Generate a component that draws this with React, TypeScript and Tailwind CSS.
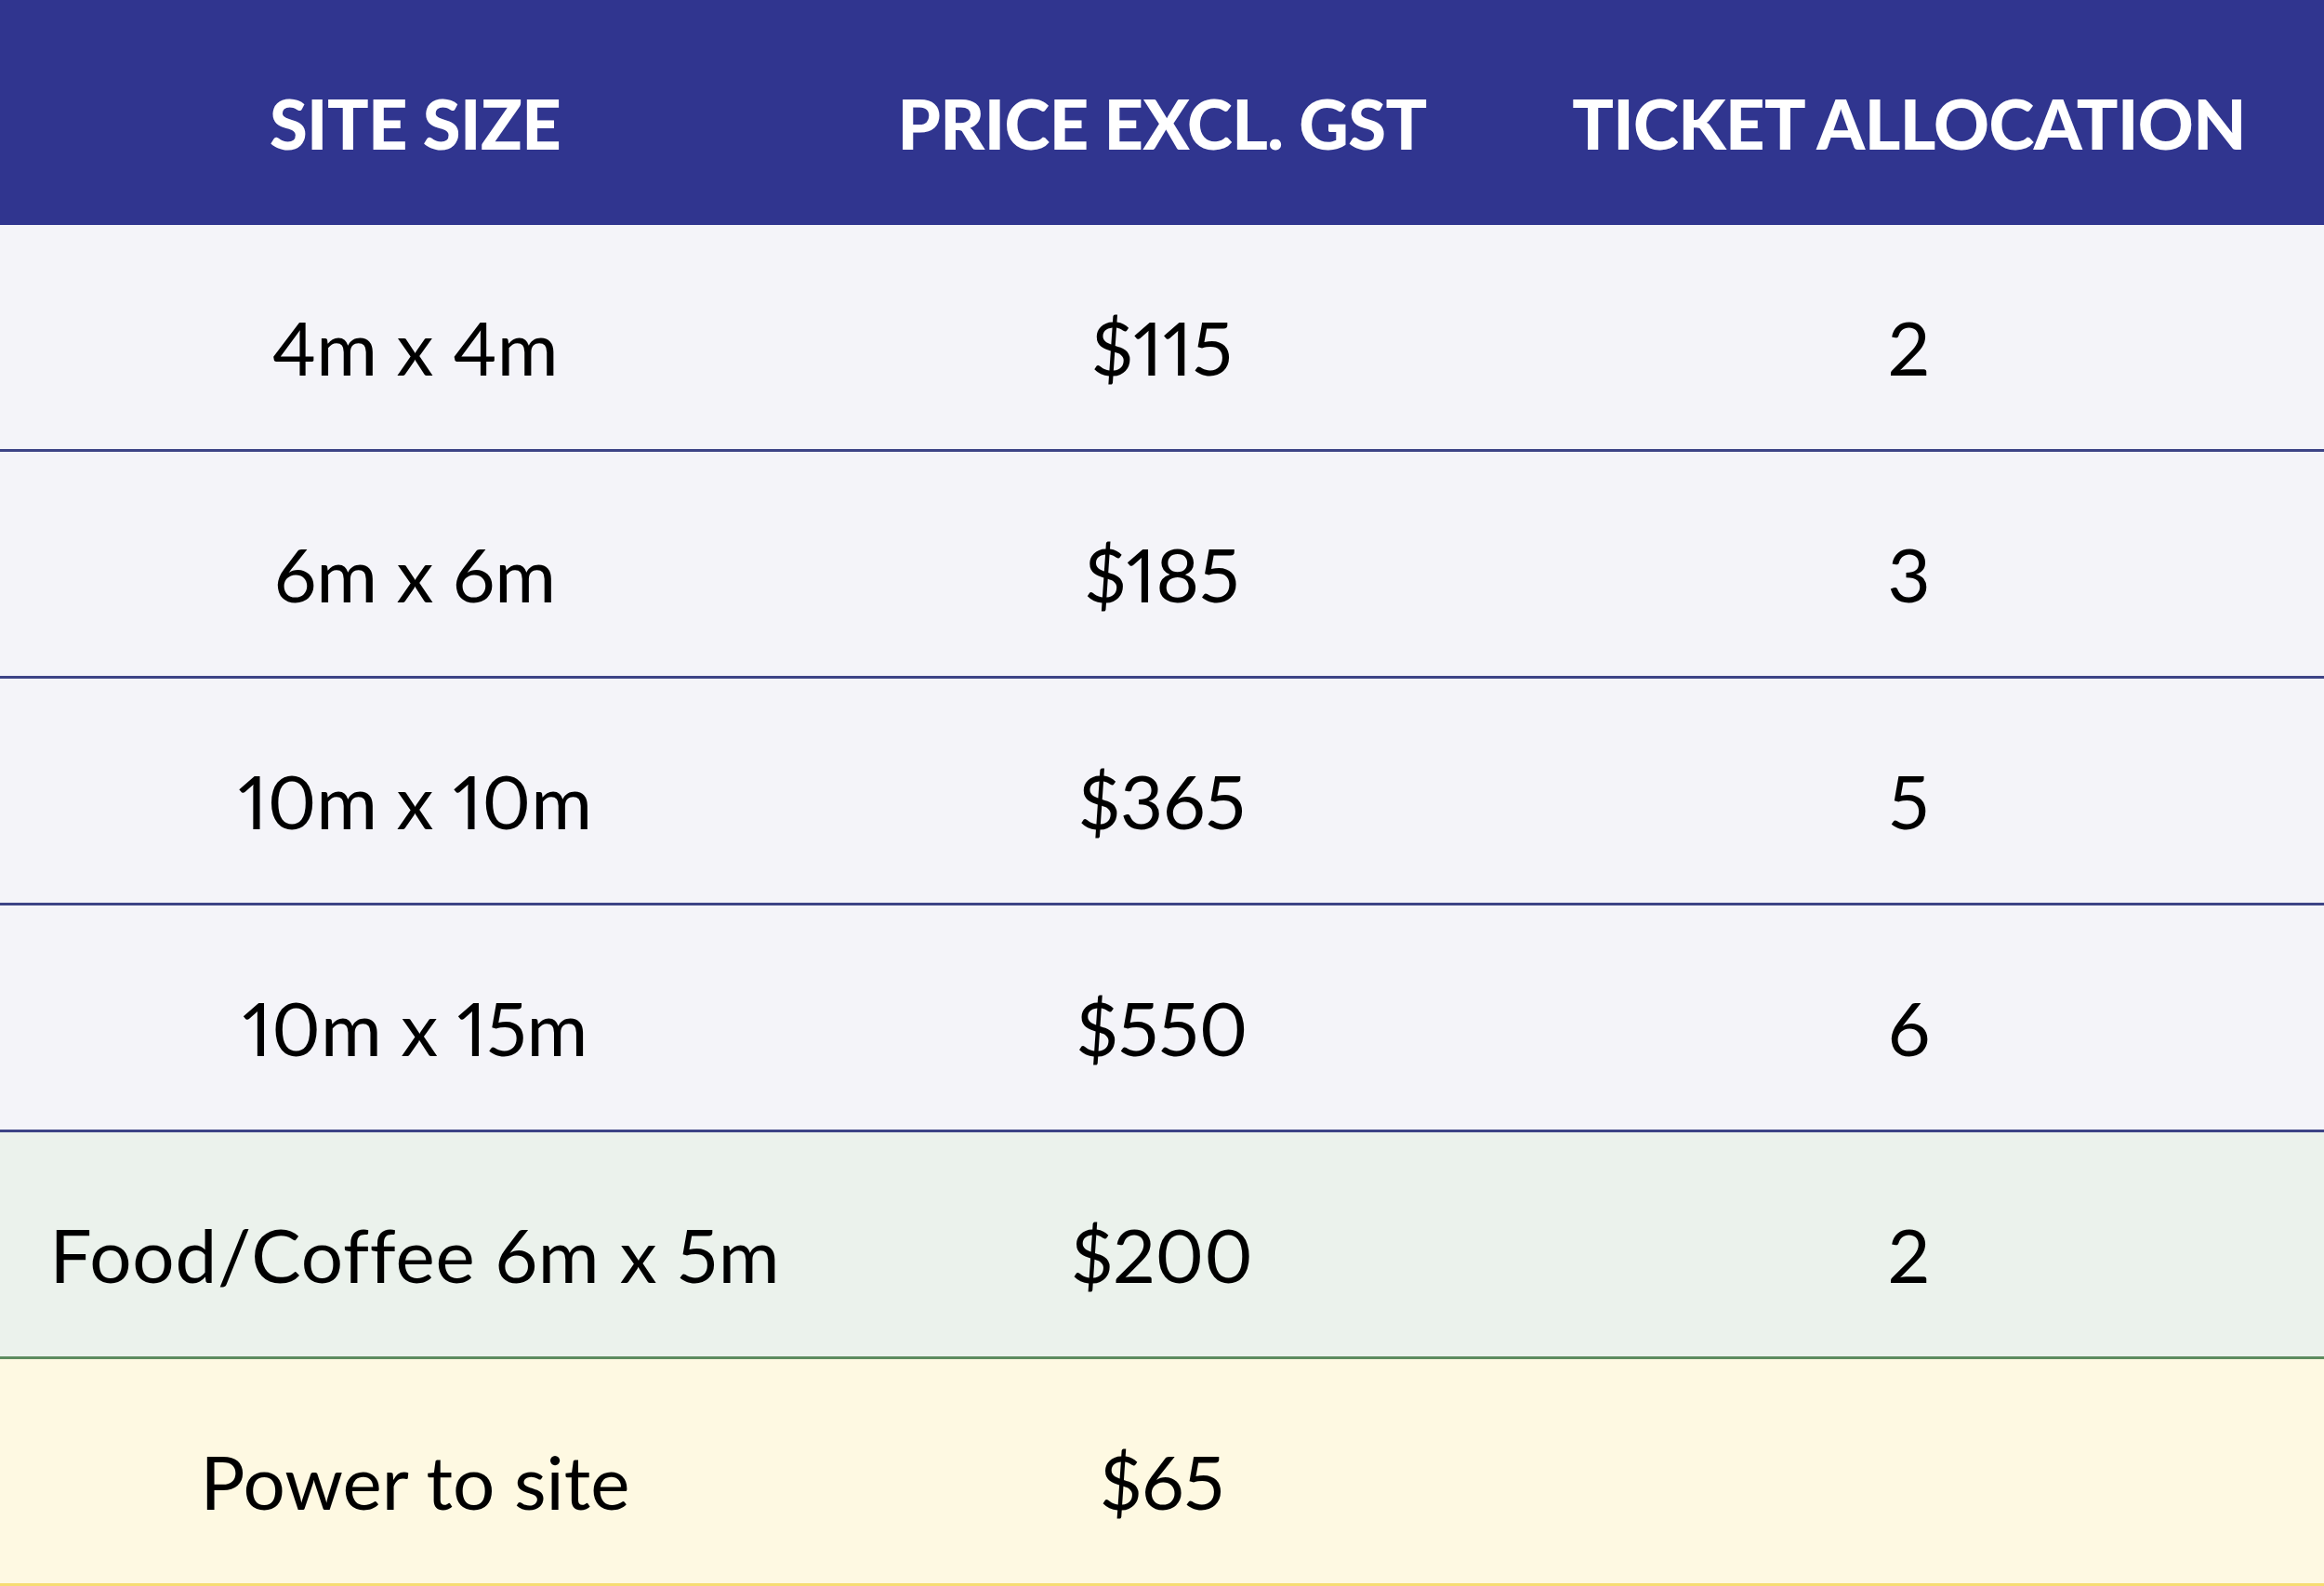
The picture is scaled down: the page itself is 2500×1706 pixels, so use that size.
const rows = [
  { size: "4m x 4m", price: "$115", tickets: "2", kind: "site" },
  { size: "6m x 6m", price: "$185", tickets: "3", kind: "site" },
  { size: "10m x 10m", price: "$365", tickets: "5", kind: "site" },
  { size: "10m x 15m", price: "$550", tickets: "6", kind: "site" },
  { size: "Food/Coffee 6m x 5m", price: "$200", tickets: "2", kind: "food" },
  { size: "Power to site", price: "$65", tickets: "", kind: "power" },
];

const rowStyle: Record<string, string> = {
  site: "bg-[#f4f4f9] border-[#3d4486]",
  food: "bg-[#ebf2ec] border-[#5d8c5f]",
  power: "bg-[#fef9e2] border-[#f6dc72]",
};

const cols = "grid grid-cols-[893px_714px_893px]";

export default function App() {
  return (
    <div className="w-[2500px] h-[1706px] overflow-hidden font-['Lato',sans-serif] text-black proportional-nums">
      {/* Header */}
      <div className={`${cols} h-[242px] pt-[22px] bg-[#30358f] items-center text-white font-black uppercase text-[74px] tracking-[-0.008em]`}>
        <div className="text-center">Site Size</div>
        <div className="text-center">Price Excl. GST</div>
        <div className="text-center">Ticket Allocation</div>
      </div>

      {/* Body */}
      {rows.map((r) => (
        <div
          key={r.size}
          className={`${cols} h-[244px] pt-[20px] border-b-[3px] items-center text-[80px] ${rowStyle[r.kind]}`}
        >
          <div className={r.kind === "food" ? "text-center tracking-[0.01em]" : "text-center"}>{r.size}</div>
          <div className="text-center">{r.price}</div>
          <div className="text-center">{r.tickets}</div>
        </div>
      ))}
    </div>
  );
}
